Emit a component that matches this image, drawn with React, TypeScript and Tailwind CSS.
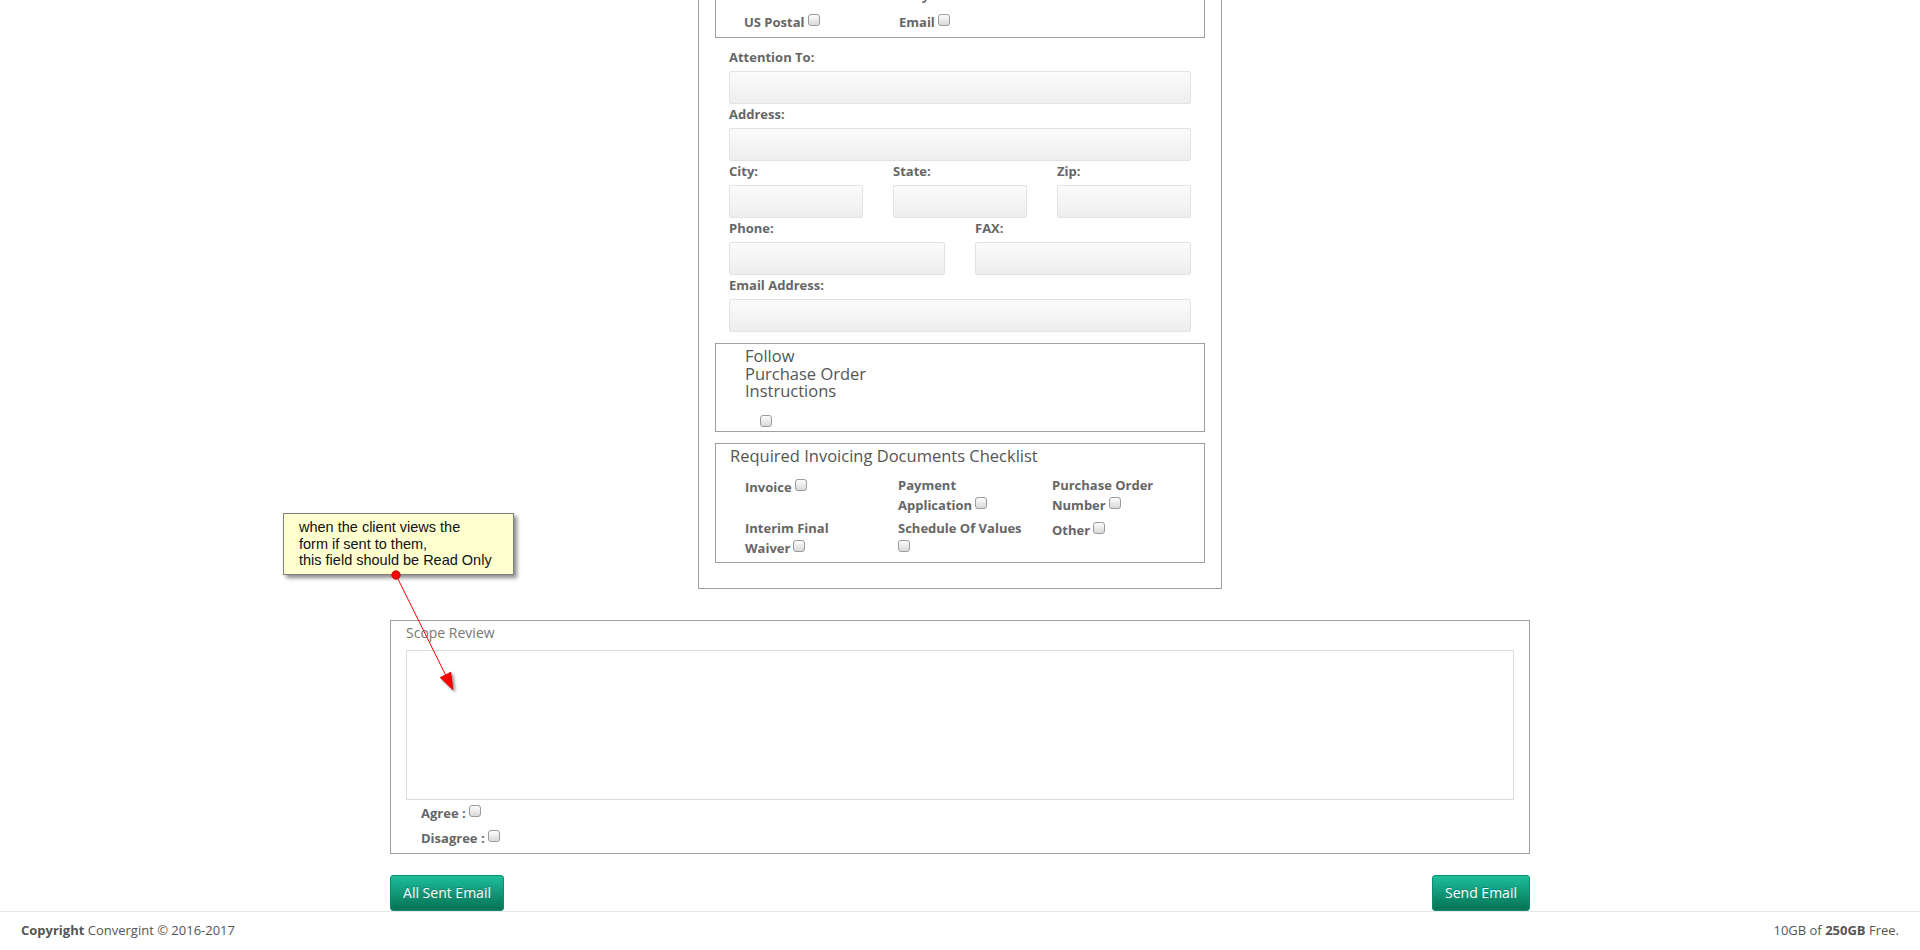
import React from "react";

const Cb = ({ className = "" }: { className?: string }) => (
  <span
    className={`inline-block w-[12px] h-[12px] rounded-[3px] border border-[#9b9b9b] bg-gradient-to-b from-[#fdfdfd] to-[#d9d9d9] align-baseline mb-[1px] ${className}`}
  />
);

const Label = ({ children, first }: { children: React.ReactNode; first?: boolean }) => (
  <div
    className={`${first ? "mt-[10px]" : "mt-[1px]"} mb-[5px] leading-[18px] font-bold text-[13px] text-[#666]`}
  >
    {children}
  </div>
);

const Input = () => (
  <div className="h-[33px] rounded-[2px] border border-[#e2e2e2] bg-gradient-to-b from-[#fbfbfb] to-[#eeeeee]" />
);

const Field = ({ label, first }: { label: string; first?: boolean }) => (
  <div>
    <Label first={first}>{label}</Label>
    <Input />
  </div>
);

const Btn = ({ children, w }: { children: React.ReactNode; w: string }) => (
  <button
    className={`${w} h-[36px] rounded-[3px] border border-[#0c8e6c] bg-gradient-to-b from-[#1cbf9e] to-[#067254] text-white text-[14px] leading-[20px] text-center [text-shadow:0_-1px_0_rgba(0,0,0,0.2)]`}
  >
    {children}
  </button>
);

export default function App() {
  return (
    <div className="relative w-[1920px] h-[950px] overflow-hidden bg-white font-['Open_Sans',sans-serif] text-[13px] text-[#666]">
      <div className="-mt-[40px]">
        {/* Upper form panel */}
        <div className="mx-auto w-[524px] border border-[#9f9f9f] pt-[13px] pb-[25px]">
          {/* delivery box */}
          <div className="mx-[16px] border border-[#9f9f9f] pt-[10px] pb-[5px]">
            <div className="grid grid-cols-[155px_1fr] pl-[28px] leading-[20px] font-bold">
              <div />
              <div>Only</div>
            </div>
            <div className="mt-[7px] grid grid-cols-[155px_1fr] pl-[28px] leading-[20px] font-bold">
              <div>
                US Postal
                <Cb className="ml-[3px]" />
              </div>
              <div>
                Email
                <Cb className="ml-[3px]" />
              </div>
            </div>
          </div>

          <div className="mx-[30px]">
            <Field label="Attention To:" first />
            <Field label="Address:" />
            <div className="grid grid-cols-3 gap-x-[30px]">
              <Field label="City:" />
              <Field label="State:" />
              <Field label="Zip:" />
            </div>
            <div className="grid grid-cols-2 gap-x-[30px]">
              <Field label="Phone:" />
              <Field label="FAX:" />
            </div>
            <Field label="Email Address:" />
          </div>

          {/* Follow PO box */}
          <div className="mx-[16px] mt-[11px] border border-[#9f9f9f] pt-[3px] pb-[4px]">
            <div className="pl-[29px] text-[16.5px] leading-[17.5px] text-[#555]">
              <div>Follow</div>
              <div>Purchase Order</div>
              <div>Instructions</div>
            </div>
            <div className="pl-[44px] mt-[15px] h-[12px]">
              <span className="block w-[12px] h-[12px] rounded-[3px] border border-[#9b9b9b] bg-gradient-to-b from-[#fdfdfd] to-[#d9d9d9]" />
            </div>
          </div>

          {/* Checklist box */}
          <div className="mx-[16px] mt-[11px] border border-[#9f9f9f] pt-[2px] pb-[4px]">
            <div className="pl-[14px] text-[16.5px] leading-[20px] text-[#555]">
              Required Invoicing Documents Checklist
            </div>
            <div className="mt-[9px] pl-[29px] grid grid-cols-[153px_154px_1fr] font-bold leading-[20px]">
              <div className="pt-[2px]">
                Invoice
                <Cb className="ml-[3px]" />
              </div>
              <div>
                Payment
                <br />
                Application
                <Cb className="ml-[3px]" />
              </div>
              <div>
                Purchase Order
                <br />
                Number
                <Cb className="ml-[3px]" />
              </div>
              <div className="mt-[3px]">
                Interim Final
                <br />
                Waiver
                <Cb className="ml-[3px]" />
              </div>
              <div className="mt-[3px]">
                Schedule Of Values
                <br />
                <Cb />
              </div>
              <div className="mt-[3px] pt-[2px]">
                Other
                <Cb className="ml-[3px]" />
              </div>
            </div>
          </div>
        </div>

        {/* Scope review */}
        <div className="mx-auto mt-[31px] w-[1140px] border border-[#9f9f9f] px-[15px] pt-[3px] pb-[6px]">
          <div className="leading-[18px] text-[14px] text-[#777]">Scope Review</div>
          <div className="mt-[8px] h-[150px] border border-[#dcdcdc] bg-white" />
          <div className="mt-[4px] pl-[15px] leading-[18px] font-bold">
            Agree :
            <Cb className="ml-[3px]" />
          </div>
          <div className="mt-[7px] pl-[15px] leading-[18px] font-bold">
            Disagree :
            <Cb className="ml-[3px]" />
          </div>
        </div>

        {/* Buttons */}
        <div className="mx-auto mt-[21px] w-[1140px] flex justify-between">
          <Btn w="w-[114px]">All Sent Email</Btn>
          <Btn w="w-[98px]">Send Email</Btn>
        </div>

        {/* Footer */}
        <div className="border-t border-[#e6e6e6] flex justify-between pl-[21px] pr-[21px] pt-[9px] leading-[18px] text-[#555]">
          <div>
            <span className="font-bold">Copyright</span> Convergint © 2016-2017
          </div>
          <div>
            10GB of <span className="font-bold">250GB</span> Free.
          </div>
        </div>
      </div>

      {/* Annotation callout */}
      <div className="absolute left-[283px] top-[513px] w-[231px] h-[62px] border border-[#7f7f7f] bg-[#ffffd0] shadow-[3px_3px_4px_rgba(0,0,0,0.45)] pl-[15px] pt-[5px] font-['Liberation_Sans',Arial,sans-serif] text-[14.5px] leading-[16.7px] text-[#111]">
        when the client views the
        <br />
        form if sent to them,
        <br />
        this field should be Read Only
      </div>
      <svg
        className="absolute left-[385px] top-[565px] pointer-events-none"
        width="80"
        height="135"
        viewBox="0 0 80 135"
      >
        <defs>
          <filter id="sh" x="-50%" y="-50%" width="200%" height="200%">
            <feDropShadow dx="2" dy="2" stdDeviation="1.5" floodColor="#000" floodOpacity="0.45" />
          </filter>
        </defs>
        <line x1="11" y1="10" x2="60.5" y2="109.8" stroke="#ff0000" strokeWidth="1" />
        <polygon points="68,125 65.9,107.1 55.1,112.5" fill="#ff0000" stroke="#c00000" strokeWidth="0.6" filter="url(#sh)" />
        <circle cx="11" cy="10" r="4.2" fill="#ff0000" stroke="#b00000" strokeWidth="0.8" />
      </svg>
    </div>
  );
}
